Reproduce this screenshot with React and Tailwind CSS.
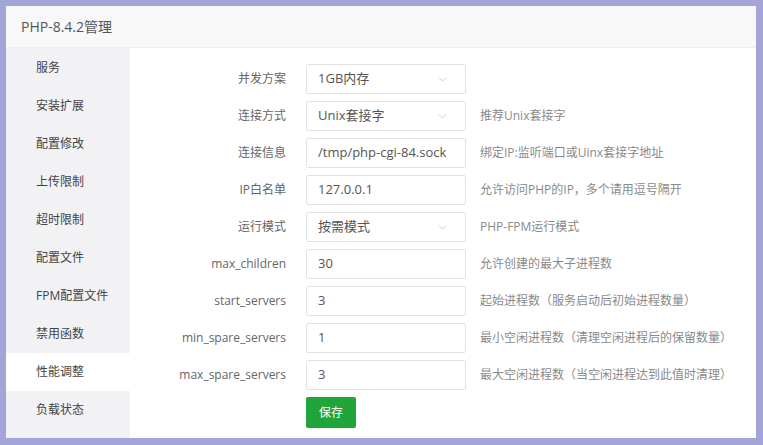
import { ChevronDown } from "lucide-react";

const menu = ["服务", "安装扩展", "配置修改", "上传限制", "超时限制", "配置文件", "FPM配置文件", "禁用函数", "性能调整", "负载状态"];

const rows = [
  { label: "并发方案", value: "1GB内存", select: true, hint: "" },
  { label: "连接方式", value: "Unix套接字", select: true, hint: "推荐Unix套接字" },
  { label: "连接信息", value: "/tmp/php-cgi-84.sock", hint: "绑定IP:监听端口或Uinx套接字地址" },
  { label: "IP白名单", value: "127.0.0.1", hint: "允许访问PHP的IP，多个请用逗号隔开" },
  { label: "运行模式", value: "按需模式", select: true, hint: "PHP-FPM运行模式" },
  { label: "max_children", value: "30", hint: "允许创建的最大子进程数" },
  { label: "start_servers", value: "3", hint: "起始进程数（服务启动后初始进程数量）" },
  { label: "min_spare_servers", value: "1", hint: "最小空闲进程数（清理空闲进程后的保留数量）" },
  { label: "max_spare_servers", value: "3", hint: "最大空闲进程数（当空闲进程达到此值时清理）" },
];

export default function App() {
  const active = "性能调整";
  return (
    <div
      className="w-[763px] h-[445px] bg-[#a3a5d8] p-[6px] pr-[7px] pb-[7px]"
      style={{ fontFamily: '"Open Sans", "Noto Sans CJK SC", sans-serif' }}
    >
      <div className="w-full h-full bg-white flex flex-col overflow-hidden">
        <div className="h-[42px] shrink-0 bg-[#f8f8f8] border-b border-[#eeeeee] flex items-center px-[15px] text-[14px] text-[#555555]">
          PHP-8.4.2管理
        </div>
        <div className="flex flex-1 min-h-0">
          <div className="w-[124px] shrink-0 bg-[#f2f2f5] pt-px">
            {menu.map((m) => (
              <div
                key={m}
                className={`h-[38px] flex items-center pl-[30px] text-[12px] text-[#444444] ${m === active ? "bg-white" : ""}`}
              >
                {m}
              </div>
            ))}
          </div>
          <div className="flex-1 pt-[16px]">
            <div className="flex flex-col gap-[7px]">
              {rows.map((r) => (
                <div key={r.label} className="flex items-center h-[30px]">
                  <div className="w-[156px] text-right text-[12px] text-[#666666] whitespace-nowrap">{r.label}</div>
                  <div className="ml-[20px] w-[160px] h-[30px] border border-[#e2e2e2] rounded-[2px] flex items-center justify-between pl-[11px] pr-[16px] text-[13px] text-[#555555] whitespace-nowrap">
                    <span>{r.value}</span>
                    {r.select && <ChevronDown className="w-[13px] h-[13px] text-[#c4c4c4]" strokeWidth={1.5} />}
                  </div>
                  {r.hint && <div className="ml-[14px] text-[12px] text-[#8a8a8a] whitespace-nowrap">{r.hint}</div>}
                </div>
              ))}
              <div className="flex">
                <button className="ml-[176px] w-[50px] h-[31px] bg-[#20a53a] rounded-[2px] text-white text-[12px]">
                  保存
                </button>
              </div>
            </div>
          </div>
        </div>
      </div>
    </div>
  );
}
